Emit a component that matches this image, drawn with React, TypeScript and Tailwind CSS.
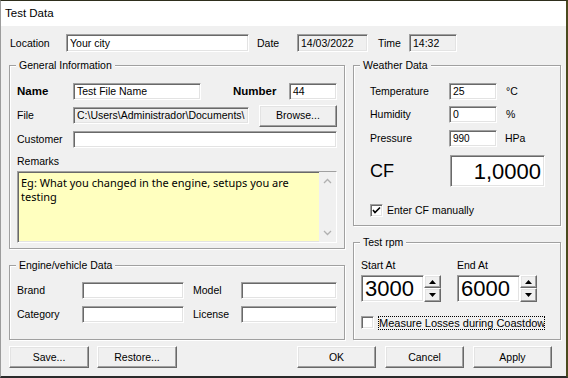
import React from "react";

const sunken =
  "border border-t-[#a0a0a0] border-l-[#a0a0a0] border-r-white border-b-white shadow-[inset_1px_1px_0_#696969,inset_-1px_-1px_0_#e3e3e3]";
const raised =
  "border border-t-white border-l-white border-r-[#696969] border-b-[#696969] shadow-[inset_-1px_-1px_0_#a0a0a0,inset_1px_1px_0_#e3e3e3]";

interface FieldProps {
  w: string;
  h?: string;
  gray?: boolean;
  className?: string;
  children?: React.ReactNode;
}

const Field: React.FC<FieldProps> = ({ w, h = "h-[17px]", gray, className = "", children }) => (
  <div
    className={`${w} ${h} ${sunken} ${gray ? "bg-[#f0f0f0]" : "bg-white"} flex items-center pl-[3px] overflow-hidden whitespace-nowrap shrink-0 ${className}`}
  >
    {children}
  </div>
);

const Btn: React.FC<{ w: string; className?: string; children: React.ReactNode }> = ({ w, className = "", children }) => (
  <div className={`${w} h-[22px] ${raised} bg-[#f0f0f0] flex items-center justify-center shrink-0 ${className}`}>
    {children}
  </div>
);

const Group: React.FC<{ title: string; className: string; children: React.ReactNode }> = ({ title, className, children }) => (
  <div
    className={`relative border border-[#a0a0a0] shadow-[inset_1px_1px_0_white,1px_1px_0_white] ${className}`}
  >
    <span className="absolute -top-[8px] left-[6px] bg-[#f0f0f0] px-[3px] leading-[14px]">{title}</span>
    {children}
  </div>
);

const CheckBox: React.FC<{ checked?: boolean }> = ({ checked }) => (
  <div className={`w-[13px] h-[13px] ${sunken} bg-white flex items-center justify-center shrink-0`}>
    {checked && (
      <svg width="9" height="9" viewBox="0 0 9 9">
        <polyline points="1,4 3,6.5 8,1.5" fill="none" stroke="#000" strokeWidth="1.6" />
      </svg>
    )}
  </div>
);

const Spin: React.FC = () => (
  <div className="flex flex-col w-[17px] h-[27px] shrink-0">
    <div className={`h-[13px] ${raised} bg-[#f0f0f0] flex items-center justify-center`}>
      <svg width="7" height="4" viewBox="0 0 7 4">
        <polygon points="3.5,0 7,4 0,4" fill="#000" />
      </svg>
    </div>
    <div className={`h-[14px] ${raised} bg-[#f0f0f0] flex items-center justify-center`}>
      <svg width="7" height="4" viewBox="0 0 7 4">
        <polygon points="0,0 7,0 3.5,4" fill="#000" />
      </svg>
    </div>
  </div>
);

const App: React.FC = () => {
  return (
    <div
      className="w-[568px] h-[378px] bg-[#f0f0f0] text-black text-[10.5px] leading-[13px] border-t border-t-[#2e2e1c] border-l border-l-[#9c9c9c] border-r-2 border-r-[#4b4a1e] border-b-2 border-b-[#2a2a2a] flex flex-col overflow-hidden"
      style={{ fontFamily: '"Liberation Sans", Arial, sans-serif' }}
    >
      {/* Title bar */}
      <div className="h-[25px] bg-white flex items-center pl-[4px] text-[11.5px] shrink-0">Test Data</div>

      {/* Location / Date / Time */}
      <div className="flex items-center h-[18px] mt-[8px] pl-[9px]">
        <span className="w-[56px]">Location</span>
        <Field w="w-[183px]" h="h-[18px]">Your city</Field>
        <span className="ml-[8px] w-[40px]">Date</span>
        <Field w="w-[71px]" h="h-[18px]" gray>14/03/2022</Field>
        <span className="ml-[10px] w-[31px]">Time</span>
        <Field w="w-[48px]" h="h-[18px]" gray>14:32</Field>
      </div>

      <div className="flex mt-[13px] pl-[8px]">
        {/* Left column */}
        <div className="flex flex-col w-[336px]">
          <Group title="General Information" className="h-[184px] pt-[17px] pl-[7px]">
            <div className="flex items-center h-[17px]">
              <span className="w-[56px] font-bold text-[11.5px]">Name</span>
              <Field w="w-[128px]">Test File Name</Field>
              <span className="ml-[32px] w-[56px] font-bold text-[11.5px]">Number</span>
              <Field w="w-[48px]">44</Field>
            </div>
            <div className="flex items-center h-[17px] mt-[7px]">
              <span className="w-[56px]">File</span>
              <Field w="w-[176px]" gray>C:\Users\Administrador\Documents\</Field>
              <Btn w="w-[78px]" className="ml-[10px]">Browse...</Btn>
            </div>
            <div className="flex items-center h-[17px] mt-[7px]">
              <span className="w-[56px]">Customer</span>
              <Field w="w-[264px]" />
            </div>
            <div className="mt-[7px]">Remarks</div>
            <div className={`mt-[3px] w-[320px] h-[72px] ${sunken} bg-[#ffffbf] flex`}>
              <div
                className="flex-1 pl-[3px] pt-[4px] text-[11px] leading-[14px]"
                style={{ fontFamily: '"Noto Sans", "DejaVu Sans", sans-serif' }}
              >
                Eg: What you changed in the engine, setups you are
                <br />
                testing
              </div>
              <div className="w-[17px] bg-[#f0f0f0] flex flex-col items-center justify-between py-[6px]">
                <svg width="9" height="6" viewBox="0 0 9 6">
                  <polyline points="1,5 4.5,1.5 8,5" fill="none" stroke="#b0b0b0" strokeWidth="1.3" />
                </svg>
                <svg width="9" height="6" viewBox="0 0 9 6">
                  <polyline points="1,1 4.5,4.5 8,1" fill="none" stroke="#b0b0b0" strokeWidth="1.3" />
                </svg>
              </div>
            </div>
          </Group>

          <Group title="Engine/vehicle Data" className="h-[75px] mt-[16px] pt-[16px] pl-[7px]">
            <div className="flex items-center h-[17px]">
              <span className="w-[65px]">Brand</span>
              <Field w="w-[102px]" />
              <span className="ml-[9px] w-[48px]">Model</span>
              <Field w="w-[96px]" />
            </div>
            <div className="flex items-center h-[17px] mt-[7px]">
              <span className="w-[65px]">Category</span>
              <Field w="w-[102px]" />
              <span className="ml-[9px] w-[48px]">License</span>
              <Field w="w-[96px]" />
            </div>
          </Group>
        </div>

        {/* Right column */}
        <div className="flex flex-col w-[208px] ml-[8px]">
          <Group title="Weather Data" className="h-[161px] pt-[17px] pl-[16px]">
            <div className="flex items-center h-[17px]">
              <span className="w-[79px]">Temperature</span>
              <Field w="w-[48px]">25</Field>
              <span className="ml-[9px]">°C</span>
            </div>
            <div className="flex items-center h-[17px] mt-[6px]">
              <span className="w-[79px]">Humidity</span>
              <Field w="w-[48px]">0</Field>
              <span className="ml-[9px]">%</span>
            </div>
            <div className="flex items-center h-[17px] mt-[7px]">
              <span className="w-[79px]">Pressure</span>
              <Field w="w-[48px]" className="text-[10px]">990</Field>
              <span className="ml-[8px]">HPa</span>
            </div>
            <div className="flex items-center h-[32px] mt-[8px]">
              <span className="w-[80px] text-[18px] leading-[20px]">CF</span>
              <Field w="w-[95px]" h="h-[32px]" className="justify-end pr-[3px] text-[22px]">1,0000</Field>
            </div>
            <div className="flex items-center h-[13px] mt-[17px]">
              <CheckBox checked />
              <span className="ml-[4px]">Enter CF manually</span>
            </div>
          </Group>

          <Group title="Test rpm" className="h-[98px] mt-[16px] pt-[16px] pl-[7px]">
            <div className="flex">
              <span className="w-[96px]">Start At</span>
              <span>End At</span>
            </div>
            <div className="flex items-center mt-[3px]">
              <Field w="w-[63px]" h="h-[27px]" className="text-[22px] pl-[2px]">3000</Field>
              <Spin />
              <Field w="w-[63px]" h="h-[27px]" className="text-[22px] pl-[2px] ml-[16px]">6000</Field>
              <Spin />
            </div>
            <div className="flex items-center h-[13px] mt-[14px]">
              <CheckBox />
              <span className="ml-[4px] w-[167px] h-[14px] border border-dotted border-black whitespace-nowrap overflow-hidden leading-[12px] text-[11px]">
                Measure Losses during Coastdown
              </span>
            </div>
          </Group>
        </div>
      </div>

      {/* Bottom buttons */}
      <div className="flex items-center mt-[6px] pl-[8px]">
        <Btn w="w-[80px]">Save...</Btn>
        <Btn w="w-[80px]" className="ml-[8px]">Restore...</Btn>
        <Btn w="w-[79px]" className="ml-[120px]">OK</Btn>
        <Btn w="w-[79px]" className="ml-[9px]">Cancel</Btn>
        <Btn w="w-[79px]" className="ml-[9px]">Apply</Btn>
      </div>
    </div>
  );
};

export default App;
